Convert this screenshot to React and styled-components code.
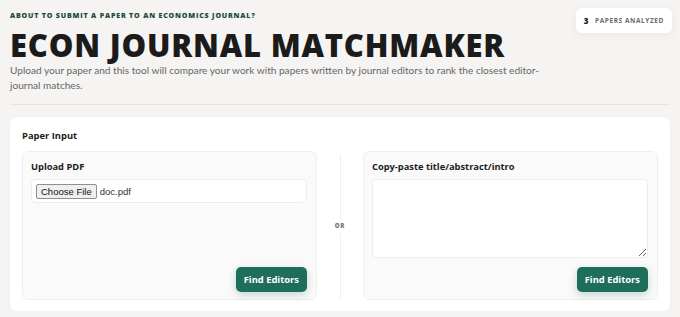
import React from 'react';
import styled, { createGlobalStyle } from 'styled-components';

const GlobalStyle = createGlobalStyle`
    body {
        margin: 0;
        background-color: #f5f4f2;
        font-family: 'Open Sans', 'Noto Sans', sans-serif;
        color: #1c1c1c;
    }
`;

const Page = styled.div`
    padding: 10px 10px 0 10px;
`;

const Header = styled.header`
    display: flex;
    justify-content: space-between;
    align-items: flex-start;
    padding-bottom: 11px;
    border-bottom: 1px solid #e6e4e1;
`;

const HeaderText = styled.div`
    display: flex;
    flex-direction: column;
    flex-shrink: 0;
`;

const Eyebrow = styled.div`
    font-size: 7.1px;
    line-height: 10px;
    font-weight: 800;
    letter-spacing: 0.8px;
    text-transform: uppercase;
    color: #1d4a3e;
`;

const Title = styled.h1`
    margin: 8px 0 1px 0;
    font-size: 31px;
    font-weight: 800;
    letter-spacing: 0.8px;
    line-height: 34px;
    color: #1b1b1b;
    white-space: nowrap;
`;

const Subtitle = styled.p`
    margin: 0;
    max-width: 545px;
    font-family: 'Lato', 'Open Sans', sans-serif;
    font-size: 10.1px;
    line-height: 15px;
    color: #666;
`;

const Badge = styled.div`
    display: flex;
    align-items: center;
    gap: 6px;
    padding: 7px 8px;
    margin-top: -2px;
    margin-right: -2px;
    background: #fff;
    border-radius: 6px;
    box-shadow: 0 2px 8px rgba(0, 0, 0, 0.06);
    font-size: 6.5px;
    font-weight: 700;
    letter-spacing: 0.6px;
    color: #6a6a6a;
    white-space: nowrap;
`;

const Count = styled.span`
    font-size: 8px;
    font-weight: 800;
    color: #1b1b1b;
`;

const Card = styled.section`
    margin-top: 12px;
    padding: 12px 12px 11px 12px;
    background: #fff;
    border-radius: 7px;
    box-shadow: 0 1px 4px rgba(0, 0, 0, 0.04);
`;

const CardTitle = styled.h2`
    margin: 0 0 9px 0;
    font-size: 9.4px;
    line-height: 13px;
    font-weight: 700;
    color: #1c1c1c;
`;

const InputGrid = styled.div`
    display: grid;
    grid-template-columns: 1fr 46px 1fr;
    height: 149px;
`;

const Panel = styled.div`
    display: flex;
    flex-direction: column;
    padding: 8px 9px 7px 8px;
    background: #fafafa;
    border: 1px solid #f0efed;
    border-radius: 6px;
`;

const PanelTitle = styled.h3`
    margin: 0 0 6px 0;
    font-size: 9.3px;
    line-height: 13px;
    font-weight: 700;
    color: #1c1c1c;
`;

const FileBox = styled.div`
    display: flex;
    align-items: center;
    gap: 3px;
    height: 24px;
    box-sizing: border-box;
    padding: 0 4px;
    background: #fff;
    border: 1px solid #eeedeb;
    border-radius: 4px;
    font-family: 'Liberation Sans', Arial, sans-serif;
    font-size: 9.5px;
    color: #333;
`;

const FileButton = styled.label`
    padding: 1px 4px;
    background: #efefef;
    border: 1px solid #8f8f8f;
    border-radius: 2px;
    color: #111;
`;

const TextBox = styled.textarea`
    flex: 1;
    resize: vertical;
    padding: 6px;
    background: #fff;
    border: 1px solid #eeedeb;
    border-radius: 4px;
    font-family: inherit;
    outline: none;
`;

const Actions = styled.div`
    display: flex;
    justify-content: flex-end;
    margin-top: auto;
    padding-top: ${(p) => (p.$tight ? '9px' : '0')};
`;

const FindButton = styled.button`
    height: 25px;
    padding: 0 8px;
    background: #1f6e5b;
    color: #fff;
    border: none;
    border-radius: 5px;
    font-family: inherit;
    font-size: 9.4px;
    font-weight: 700;
    box-shadow: 0 3px 8px rgba(31, 110, 91, 0.25);
    cursor: pointer;
`;

const Divider = styled.div`
    display: flex;
    align-items: center;
    justify-content: center;
    position: relative;
    &::before {
        content: '';
        position: absolute;
        top: 3px;
        bottom: 0;
        left: 50%;
        width: 1px;
        background: #f0efed;
    }
`;

const OrLabel = styled.span`
    position: relative;
    padding: 3px 0;
    background: #fff;
    font-size: 6px;
    font-weight: 800;
    letter-spacing: 0.8px;
    color: #777;
`;

export default function App() {
    return (
        <>
            <GlobalStyle />
            <Page>
                <Header>
                    <HeaderText>
                        <Eyebrow>About to submit a paper to an economics journal?</Eyebrow>
                        <Title>ECON JOURNAL MATCHMAKER</Title>
                        <Subtitle>
                            Upload your paper and this tool will compare your work with papers written by journal editors to rank the closest editor-journal matches.
                        </Subtitle>
                    </HeaderText>
                    <Badge>
                        <Count>3</Count>
                        PAPERS ANALYZED
                    </Badge>
                </Header>

                <Card>
                    <CardTitle>Paper Input</CardTitle>
                    <InputGrid>
                        <Panel>
                            <PanelTitle>Upload PDF</PanelTitle>
                            <FileBox>
                                <FileButton>Choose File</FileButton>
                                doc.pdf
                            </FileBox>
                            <Actions>
                                <FindButton>Find Editors</FindButton>
                            </Actions>
                        </Panel>
                        <Divider>
                            <OrLabel>OR</OrLabel>
                        </Divider>
                        <Panel>
                            <PanelTitle>Copy-paste title/abstract/intro</PanelTitle>
                            <TextBox />
                            <Actions $tight>
                                <FindButton>Find Editors</FindButton>
                            </Actions>
                        </Panel>
                    </InputGrid>
                </Card>
            </Page>
        </>
    );
}
